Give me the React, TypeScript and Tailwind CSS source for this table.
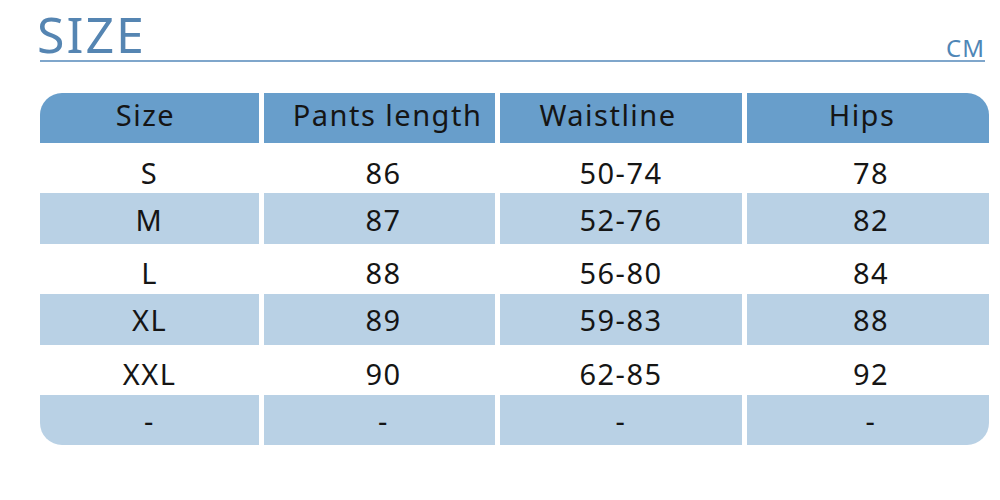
const rows = [
  ["S", "86", "50-74", "78"],
  ["M", "87", "52-76", "82"],
  ["L", "88", "56-80", "84"],
  ["XL", "89", "59-83", "88"],
  ["XXL", "90", "62-85", "92"],
  ["-", "-", "-", "-"],
];

const heads = [
  { t: "Size", c: "pr-[8px] rounded-tl-[22px]" },
  { t: "Pants length", c: "pl-[16px]" },
  { t: "Waistline", c: "pr-[26px]" },
  { t: "Hips", c: "pr-[12px] rounded-tr-[22px]" },
];

export default function App() {
  return (
    <div className="w-[1000px] h-[500px] bg-white overflow-hidden" style={{ fontFamily: "'Noto Sans', 'Open Sans', sans-serif" }}>
      <div className="ml-[40px] w-[945px] flex items-end justify-between border-b-2 border-[#7fa6cb] h-[62px]">
        <div className="text-[50px] leading-none font-normal tracking-[2px] text-[#5585b2] -ml-[3px] mb-[1px]">SIZE</div>
        <div className="text-[24px] leading-none tracking-[1px] text-[#4f86b6]">CM</div>
      </div>

      <div className="ml-[40px] mt-[31px] w-[950px] grid grid-cols-[219px_231px_242px_242px] gap-x-[5px] text-[#151515] text-[29px] tracking-[1.5px] leading-none">
        {heads.map((h) => (
          <div key={h.t} className={"h-[50px] bg-[#689ecb] flex items-center justify-center pb-[8px] " + h.c}>
            {h.t}
          </div>
        ))}
        {rows.map((r, ri) =>
          r.map((c, ci) => (
            <div
              key={ri + "-" + ci}
              className={
                "h-[50.4px] flex items-center justify-center " +
                (ri % 2 === 1 ? "bg-[#b9d1e5] pt-[1px] " : "bg-white pt-[8px] ") +
                (ci === 1 ? "pl-[8px] " : "") +
                (ci === 3 ? "pl-[6px] " : "") +
                (ri === 5 && ci === 0 ? "rounded-bl-[22px]" : "") +
                (ri === 5 && ci === 3 ? "rounded-br-[22px]" : "")
              }
            >
              {c}
            </div>
          ))
        )}
      </div>
    </div>
  );
}
